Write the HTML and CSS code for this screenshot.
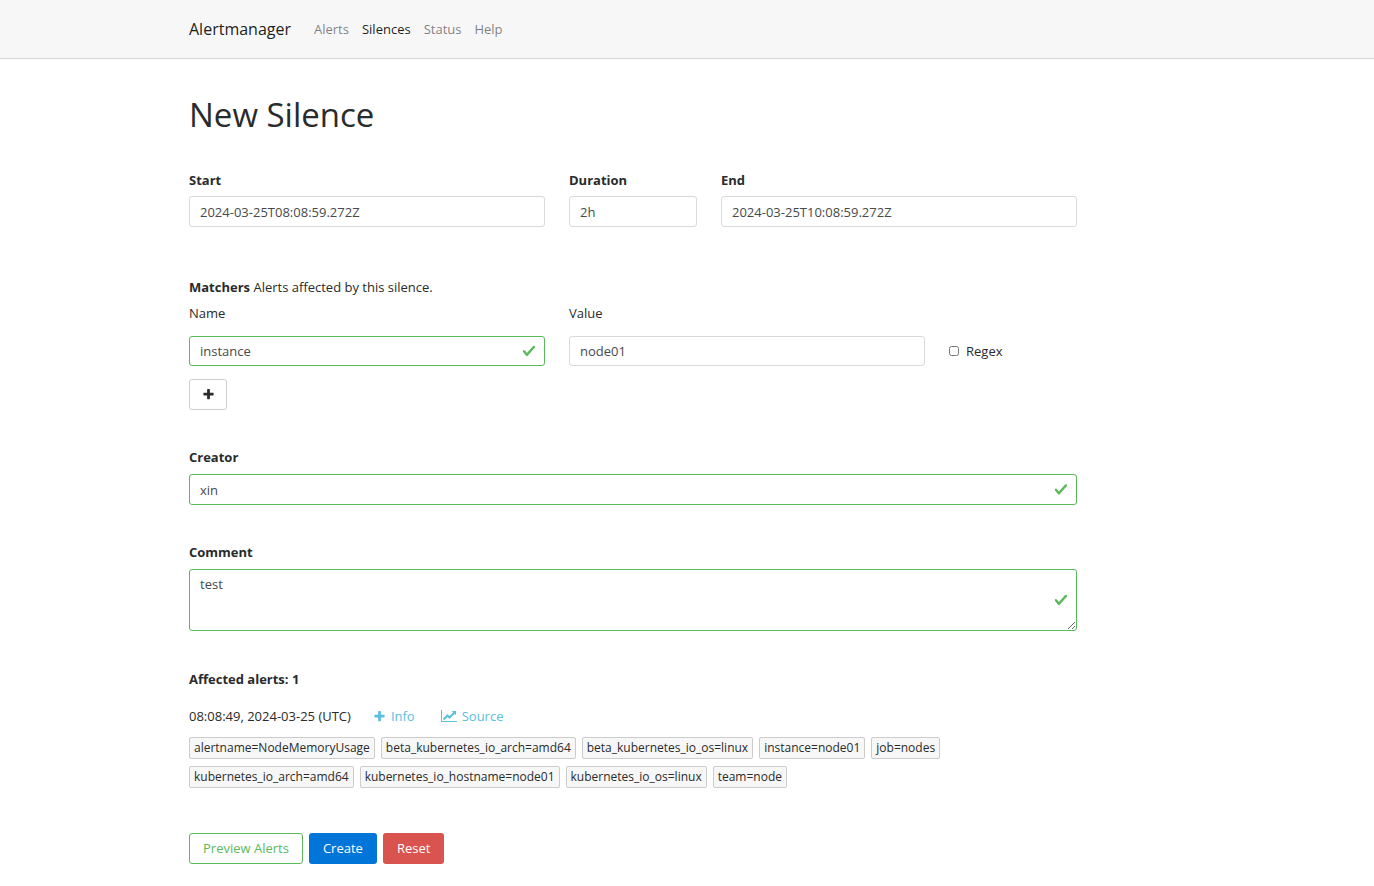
FILE: index.html
```html
<!DOCTYPE html>
<html lang="en">
<head>
  <meta charset="UTF-8">
  <meta name="viewport" content="width=device-width, initial-scale=1.0">
  <title>Alertmanager</title>
  <link rel="stylesheet" href="styles.css">
</head>
<body>
  <!-- Shared icon shapes -->
  <svg class="icon-defs" aria-hidden="true">
    <symbol id="icon-plus" viewBox="0 0 1792 1792"><path d="M1600 736v192q0 40-28 68t-68 28h-416v416q0 40-28 68t-68 28h-192q-40 0-68-28t-28-68v-416h-416q-40 0-68-28t-28-68v-192q0-40 28-68t68-28h416v-416q0-40 28-68t68-28h192q40 0 68 28t28 68v416h416q40 0 68 28t28 68z"/></symbol>
    <symbol id="icon-chart" viewBox="0 0 2048 1792"><path d="M2048 1536v128h-2048v-1536h128v1408h1920zm-128-1248v435q0 21-19.5 29.5t-35.5-7.5l-121-121-633 633q-10 10-23 10t-23-10l-233-233-416 416-192-192 585-585q10-10 23-10t23 10l233 233 464-464-121-121q-16-16-7.5-35.5t29.5-19.5h435q14 0 23 9t9 23z"/></symbol>
    <symbol id="icon-check" viewBox="0 0 8 8"><path d="M2.3 6.73L.6 4.53c-.4-1.04.46-1.4 1.1-.8l1.1 1.4 3.4-3.8c.6-.63 1.6-.27 1.2.7l-4 4.6c-.43.5-.8.4-1.1.1z"/></symbol>
  </svg>

  <header class="navbar">
    <nav class="container nav">
      <a class="navbar-brand" href="#">Alertmanager</a>
      <a class="nav-link" href="#/alerts">Alerts</a>
      <a class="nav-link active" href="#/silences">Silences</a>
      <a class="nav-link" href="#/status">Status</a>
      <a class="nav-link" href="#/help">Help</a>
    </nav>
  </header>

  <main class="container">
    <h1>New Silence</h1>

    <form class="silence-form">
      <div class="row times">
        <div class="col-5">
          <label class="label" for="start">Start</label>
          <input class="form-control" id="start" type="text" value="2024-03-25T08:08:59.272Z">
        </div>
        <div class="col-2">
          <label class="label" for="duration">Duration</label>
          <input class="form-control" id="duration" type="text" value="2h">
        </div>
        <div class="col-5">
          <label class="label" for="end">End</label>
          <input class="form-control" id="end" type="text" value="2024-03-25T10:08:59.272Z">
        </div>
      </div>

      <section class="matchers">
        <div><strong>Matchers</strong> Alerts affected by this silence.</div>
        <div class="row matcher-head">
          <label class="col-5" for="matcher-name">Name</label>
          <label class="col-5" for="matcher-value">Value</label>
        </div>
        <div class="row matcher">
          <div class="col-5 field">
            <input class="form-control valid" id="matcher-name" type="text" value="instance">
            <svg class="check"><use href="#icon-check"/></svg>
          </div>
          <div class="col-5">
            <input class="form-control" id="matcher-value" type="text" value="node01">
          </div>
          <label class="col-2 regex"><input type="checkbox"> Regex</label>
        </div>
        <button class="btn btn-add" type="button" aria-label="Add matcher"><svg class="icon"><use href="#icon-plus"/></svg></button>
      </section>

      <div class="form-group">
        <label class="label" for="creator">Creator</label>
        <div class="field">
          <input class="form-control valid" id="creator" type="text" value="xin">
          <svg class="check"><use href="#icon-check"/></svg>
        </div>
      </div>

      <div class="form-group">
        <label class="label" for="comment">Comment</label>
        <div class="field">
          <textarea class="form-control valid" id="comment">test</textarea>
          <svg class="check"><use href="#icon-check"/></svg>
        </div>
      </div>

      <section class="affected">
        <strong>Affected alerts: 1</strong>
        <div class="alert-info">
          <span>08:08:49, 2024-03-25 (UTC)</span>
          <button class="link" type="button"><svg class="icon"><use href="#icon-plus"/></svg>Info</button>
          <a class="link" href="#"><svg class="icon icon-wide"><use href="#icon-chart"/></svg>Source</a>
        </div>
        <div class="tags">
          <span class="tag">alertname=NodeMemoryUsage</span>
          <span class="tag">beta_kubernetes_io_arch=amd64</span>
          <span class="tag">beta_kubernetes_io_os=linux</span>
          <span class="tag">instance=node01</span>
          <span class="tag">job=nodes</span>
          <span class="tag">kubernetes_io_arch=amd64</span>
          <span class="tag">kubernetes_io_hostname=node01</span>
          <span class="tag">kubernetes_io_os=linux</span>
          <span class="tag">team=node</span>
        </div>
      </section>

      <div class="actions">
        <button class="btn btn-outline" type="button">Preview Alerts</button>
        <button class="btn btn-primary" type="button">Create</button>
        <button class="btn btn-danger" type="reset">Reset</button>
      </div>
    </form>
  </main>
</body>
</html>
```
FILE: styles.css
```css
* {
  box-sizing: border-box;
}

body {
  margin: 0;
  font-family: "Segoe UI", "Open Sans", "Noto Sans", sans-serif;
  font-size: 13px;
  line-height: 20px;
  color: #292b2c;
  background-color: #fff;
}

input,
textarea,
button {
  font: inherit;
}

a {
  text-decoration: none;
}

.icon-defs {
  display: none;
}

.container {
  width: 100%;
  max-width: 1020px;
  margin: 0 auto;
  padding: 0 12px;
}

/* Navbar */
.navbar {
  padding: 16px 0;
  background-color: #f7f7f7;
  border-bottom: 1px solid #d5d5d5;
}

.nav {
  display: flex;
  align-items: center;
  gap: 13px;
}

.navbar-brand {
  margin-right: 10px;
  font-size: 16px;
  line-height: 26px;
  color: rgba(0, 0, 0, 0.9);
}

.nav-link {
  color: rgba(0, 0, 0, 0.5);
}

.nav-link.active {
  color: rgba(0, 0, 0, 0.9);
}

h1 {
  margin: 0;
  padding: 36px 0 35px;
  font-size: 33px;
  font-weight: 400;
  line-height: 40px;
}

/* Form */
.silence-form {
  max-width: 888px;
  padding-bottom: 22px;
}

.row {
  display: grid;
  grid-template-columns: repeat(12, 1fr);
  column-gap: 24px;
}

.col-2 {
  grid-column: span 2;
}

.col-5 {
  grid-column: span 5;
}

.label {
  display: block;
  margin-bottom: 7px;
  font-weight: 700;
}

.times .label {
  margin-bottom: 6px;
}

.form-control {
  display: block;
  width: 100%;
  height: 31px;
  padding: 4px 10px;
  color: #464a4c;
  background-color: #fff;
  border: 1px solid #d9d9d9;
  border-radius: 3px;
}

.form-control.valid {
  padding-right: 30px;
  border-color: #5cb85c;
}

textarea.form-control {
  height: 62px;
  resize: vertical;
}

.field {
  position: relative;
}

.check {
  position: absolute;
  top: 0;
  right: 9px;
  width: 14px;
  height: 100%;
  fill: #5cb85c;
  pointer-events: none;
}

.matchers {
  margin-top: 50px;
}

.matcher-head {
  margin: 6px 0 13px;
}

.matcher {
  align-items: center;
  margin-bottom: 13px;
}

.matcher .form-control {
  height: 30px;
}

.regex {
  display: flex;
  align-items: center;
  gap: 7px;
}

.regex input {
  width: 10px;
  height: 10px;
  margin: 0;
}

.form-group {
  margin-top: 37px;
}

/* Affected alerts */
.affected {
  margin-top: 38px;
}

.alert-info {
  display: flex;
  align-items: center;
  margin: 17px 0 11px;
}

.link {
  display: flex;
  align-items: center;
  gap: 5px;
  margin-left: 22px;
  padding: 0;
  color: #5bc0de;
  background: none;
  border: 0;
  cursor: pointer;
}

.link + .link {
  margin-left: 26px;
}

.icon {
  width: 13px;
  height: 13px;
  fill: currentColor;
}

.icon-wide {
  width: 16px;
  height: 14px;
}

.tags {
  display: flex;
  flex-wrap: wrap;
  gap: 7px 6px;
}

.tag {
  padding: 0 4px;
  font-size: 12px;
  background-color: #f7f7f7;
  border: 1px solid #ccc;
  border-radius: 2px;
}

/* Buttons */
.btn {
  height: 31px;
  padding: 0 13px 2px;
  color: #fff;
  border: 1px solid transparent;
  border-radius: 3px;
  cursor: pointer;
}

.btn-add {
  display: flex;
  align-items: center;
  justify-content: center;
  width: 38px;
  padding: 0;
  color: #292b2c;
  background-color: #fff;
  border-color: #ccc;
}

.actions {
  display: flex;
  gap: 6px;
  margin-top: 45px;
}

.btn-outline {
  color: #5cb85c;
  background-color: #fff;
  border-color: #5cb85c;
}

.btn-primary {
  background-color: #0275d8;
}

.btn-danger {
  background-color: #d9534f;
}
```
